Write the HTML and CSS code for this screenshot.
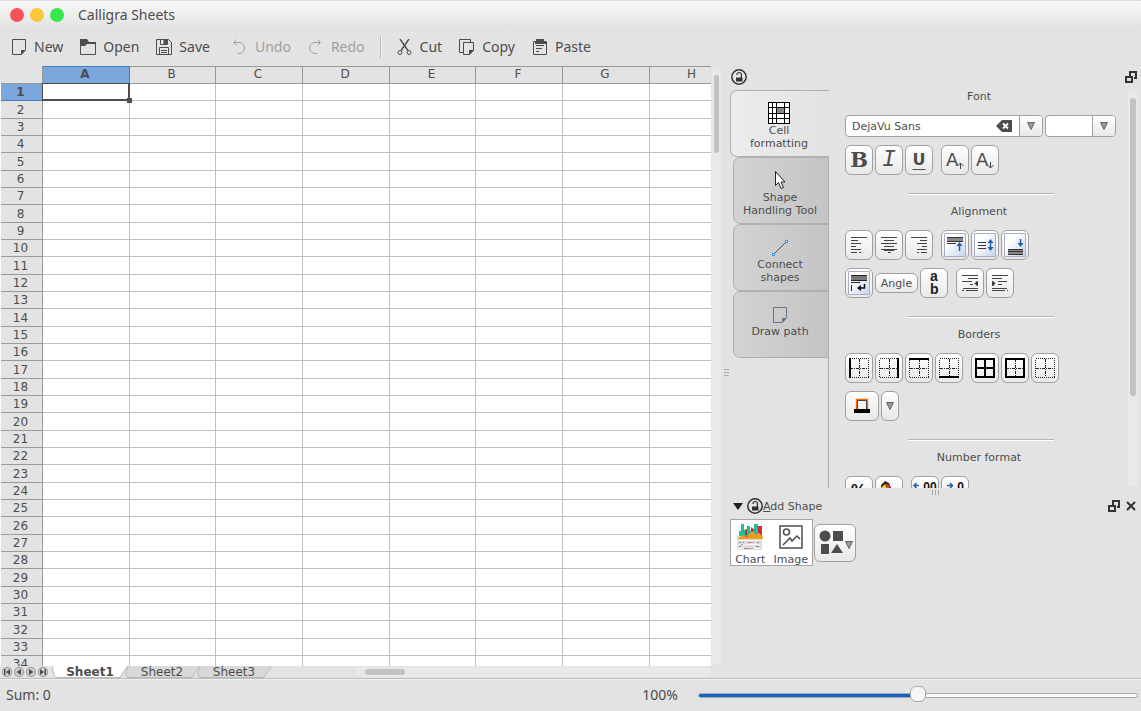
FILE: index.html
```
<!DOCTYPE html>
<html lang="en">
<head>
    <meta charset="UTF-8">
    <meta name="viewport" content="width=device-width, initial-scale=1.0">
    <title>Calligra Sheets</title>
    <link rel="stylesheet" href="styles.css">
</head>
<body>
    <!-- shared icons -->
    <svg class="defs" width="0" height="0" aria-hidden="true">
        <symbol id="page" viewBox="0 0 16 16">
            <path d="M1.5 .5h13v10l-4 5h-9z" fill="none" stroke="currentColor"/>
            <path d="M10 16v-5h5z" fill="currentColor"/>
        </symbol>
        <symbol id="lock" viewBox="0 0 16 16">
            <circle cx="8" cy="8" r="7.2" fill="none" stroke="#333" stroke-width="1.5"/>
            <path d="M6 6V5.500a2.200 2 0 0 1 4.400 0V9" fill="none" stroke="#333" stroke-width="1.2"/>
            <path d="M5 8.500h6.500V12.500H5z" fill="#333"/>
        </symbol>
        <symbol id="float" viewBox="0 0 12 12">
            <path d="M5 5V1h6v6H9" fill="none" stroke="#333" stroke-width="2"/>
            <path d="M1 6h6v5H1z" fill="none" stroke="#333" stroke-width="2"/>
        </symbol>
        <symbol id="down" viewBox="0 0 8 8">
            <path d="M.5 .5h7L4 7.500z" fill="#999" stroke="#666"/>
        </symbol>
        <symbol id="grid" viewBox="0 0 20 20">
            <g shape-rendering="crispEdges" fill="none" stroke="#222">
                <path d="M.5 .5h19v19H.5z" stroke-dasharray="1 1"/>
                <path d="M10.500 1v18M1 10.500h18" stroke-dasharray="3 1 1 1"/>
            </g>
        </symbol>
        <linearGradient id="sky" x2="1" y2="1">
            <stop offset=".3" stop-color="#fff"/>
            <stop offset="1" stop-color="#c4d2ea"/>
        </linearGradient>
        <symbol id="card" viewBox="0 0 22 24">
            <path d="M.5 .5h21v23H.5z" fill="url(#sky)" stroke="#a9b0c6"/>
        </symbol>
    </svg>

    <header class="titlebar">
        <button class="light close" aria-label="Close"></button>
        <button class="light minimize" aria-label="Minimize"></button>
        <button class="light maximize" aria-label="Maximize"></button>
        <h1>Calligra Sheets</h1>
    </header>

    <div class="toolbar">
        <button><svg width="16" height="16"><use href="#page"/></svg><span>New</span></button>
        <button>
            <svg width="16" height="16"><path d="M.5 4v11.500h15V4.500H6" fill="none" stroke="currentColor"/><path d="M0 0h7l2 3h7v2H7L5 7H0z" fill="currentColor"/></svg>
            <span>Open</span>
        </button>
        <button>
            <svg width="16" height="16" fill="none" stroke="currentColor"><path d="M.5 .5h12l3 3v12H.5zM3.500 15V8.500h9V15M4.500 .5v5h7v-5M5 11.500h6M5 13.500h6"/><path d="M8 1h3v4H8z" fill="currentColor"/></svg>
            <span>Save</span>
        </button>
        <button class="spaced" disabled>
            <svg width="16" height="16" fill="none" stroke="currentColor"><path d="M4.500 .5l-3 3 3 3M2 3.500h5a5.500 5.500 0 0 1 0 11H5.500"/></svg>
            <span>Undo</span>
        </button>
        <button disabled>
            <svg width="16" height="16" fill="none" stroke="currentColor"><path d="M9.500 .5l3 3-3 3M12 3.500H7a5.500 5.500 0 0 0 0 11h1.500"/></svg>
            <span>Redo</span>
        </button>
        <i class="divider"></i>
        <button>
            <svg width="16" height="16" fill="none" stroke="currentColor"><path d="M3 0l8 11.500M12 0L4 11.500" stroke-width="1.400"/><circle cx="3" cy="13.500" r="2"/><circle cx="12" cy="13.500" r="2"/></svg>
            <span>Cut</span>
        </button>
        <button>
            <svg width="16" height="16"><path d="M4 13.500H.5V.5h11V3M4.500 3.500h10v8l-4 4h-6z" fill="none" stroke="currentColor"/><path d="M10 16v-5h5z" fill="currentColor"/></svg>
            <span>Copy</span>
        </button>
        <button>
            <svg width="16" height="16"><path d="M1.500 2.500h13v13h-13z" fill="none" stroke="currentColor"/><path d="M4 0h8v2h2v3H3V2h1z" fill="currentColor"/><path d="M4 6.500h8M4 9.500h6M4 12.500h3" stroke="currentColor"/></svg>
            <span>Paste</span>
        </button>
    </div>

    <main class="workspace">
        <section class="editor">
            <div class="sheet">
                <table>
                    <thead><tr id="columns"><td class="corner"></td></tr></thead>
                    <tbody id="rows"></tbody>
                </table>
            </div>
            <div class="vscroll"><i></i></div>
            <nav class="sheetbar">
                <div class="steps">
                    <button aria-label="First sheet"><svg viewBox="0 0 10 10"><path d="M2 2h1.500v6H2zM8 2v6L4 5z"/></svg></button>
                    <button aria-label="Previous sheet"><svg viewBox="0 0 10 10"><path d="M7 2v6L2.500 5z"/></svg></button>
                    <button aria-label="Next sheet"><svg viewBox="0 0 10 10"><path d="M3 2v6l4.500-3z"/></svg></button>
                    <button aria-label="Last sheet"><svg viewBox="0 0 10 10"><path d="M6.500 2H8v6H6.500zM2 2v6l4-3z"/></svg></button>
                </div>
                <button class="tab active"><svg viewBox="0 0 76 12"><path d="M.5 0Q1 11.500 5 11.500h63L75.500 0"/></svg><span>Sheet1</span></button>
                <button class="tab"><svg viewBox="0 0 76 12"><path d="M4 0Q-1 11.500 5 11.500h63L75.500 0"/></svg><span>Sheet2</span></button>
                <button class="tab"><svg viewBox="0 0 76 12"><path d="M4 0Q-1 11.500 5 11.500h63L75.500 0"/></svg><span>Sheet3</span></button>
                <div class="hscroll"><i></i></div>
            </nav>
        </section>

        <div class="grip"><i></i><i></i><i></i></div>

        <aside class="docks">
            <section class="dock tools">
                <div class="dock-head">
                    <button aria-label="Lock"><svg width="16" height="16"><use href="#lock"/></svg></button>
                    <button class="right" aria-label="Float"><svg width="12" height="12"><use href="#float"/></svg></button>
                </div>
                <div class="dock-body">
                    <div class="tool-tabs">
                        <button class="active">
                            <svg width="22" height="22" shape-rendering="crispEdges"><path d="M0 0h22v22H0z" fill="#fff"/><path d="M9 6h7v5H9z" fill="#888"/><path d="M.5 .5h21v21H.5zM4.500 1v20M8.500 1v20M16.500 1v20M1 5.500h20M1 11.500h20M1 16.500h20" fill="none" stroke="#000"/></svg>
                            <span>Cell<br>formatting</span>
                        </button>
                        <button>
                            <svg width="22" height="22"><path d="M6.500 2.500v14l3-3 2.500 6 2.500-1-2.500-5.500h4z" fill="#fff" stroke="#222"/></svg>
                            <span>Shape<br>Handling Tool</span>
                        </button>
                        <button>
                            <svg width="22" height="22"><path d="M5 18L17 6" stroke="#555"/><path d="M3.500 17.500h2v2h-2zM16.500 4.500h2v2h-2z" fill="#fff" stroke="#1d8fe8"/></svg>
                            <span>Connect<br>shapes</span>
                        </button>
                        <button class="slate">
                            <svg width="16" height="22"><use href="#page" y="4" width="16" height="16"/></svg>
                            <span>Draw path</span>
                        </button>
                    </div>

                    <div class="options">
                        <h2>Font</h2>
                        <div class="row">
                            <div class="combo family">
                                <input type="text" value="DejaVu Sans" aria-label="Font family">
                                <button class="clear" aria-label="Clear"><svg width="16" height="12"><path d="M6 0h10v12H6L0 6z" fill="#4d4d4d"/><path d="M7 3.500l5 5M12 3.500l-5 5" stroke="#fff" stroke-width="1.800"/></svg></button>
                                <button class="drop" aria-label="Font list"><svg width="8" height="8"><use href="#down"/></svg></button>
                            </div>
                            <div class="combo size">
                                <input type="text" aria-label="Font size">
                                <button class="drop" aria-label="Size list"><svg width="8" height="8"><use href="#down"/></svg></button>
                            </div>
                        </div>
                        <div class="row">
                            <button class="btn bold">B</button>
                            <button class="btn italic">I</button>
                            <button class="btn under">U</button>
                            <button class="btn group" aria-label="Increase font size"><svg width="20" height="24"><text class="big-a" x="1" y="18">A</text><path d="M15.500 21v-6M12.500 18l3-3 3 3" fill="none" stroke="#444"/></svg></button>
                            <button class="btn" aria-label="Decrease font size"><svg width="20" height="24"><text class="big-a" x="1" y="18">A</text><path d="M15.500 14v6M12.500 17l3 3 3-3" fill="none" stroke="#444"/></svg></button>
                        </div>
                        <hr>

                        <h2>Alignment</h2>
                        <div class="row">
                            <button class="btn" aria-label="Align left"><svg width="16" height="16" stroke="#444"><path d="M0 .5h16M0 3.500h7M0 6.500h10M0 9.500h5M0 12.500h10M0 15.500h6M8 15.500h2"/></svg></button>
                            <button class="btn" aria-label="Align center"><svg width="16" height="16" stroke="#444"><path d="M0 .5h16M3 3.500h10M0 6.500h16M3 9.500h10M0 12.500h16M3 13.500h10M7 15.500h3"/></svg></button>
                            <button class="btn" aria-label="Align right"><svg width="16" height="16" stroke="#444"><path d="M0 .5h16M9 3.500h7M6 6.500h10M11 9.500h5M6 12.500h10M6 15.500h2M10 15.500h6"/></svg></button>
                            <button class="btn group" aria-label="Align top"><svg width="22" height="24"><use href="#card"/><path d="M3 4h16v5H3z" fill="#888"/><path d="M3 4.500h16M3 8.500h16M3 10.500h9" stroke="#333"/><path d="M15.500 18v-5" stroke="#245ca8" stroke-width="1.500"/><path d="M12.500 13l3-4 3 4z" fill="#245ca8"/></svg></button>
                            <button class="btn" aria-label="Align middle"><svg width="22" height="24"><use href="#card"/><path d="M4 9.500h8M4 12.500h8M4 15.500h8" stroke="#333"/><path d="M16.500 9v7" stroke="#245ca8" stroke-width="1.500"/><path d="M13.500 10l3-4 3 4zM13.500 14l3 4 3-4z" fill="#245ca8"/></svg></button>
                            <button class="btn" aria-label="Align bottom"><svg width="22" height="24"><use href="#card"/><path d="M4 16h15v5H4z" fill="#888"/><path d="M4 16.500h15M4 18.500h15M4 21.500h15" stroke="#333"/><path d="M16.500 6v6" stroke="#245ca8" stroke-width="1.500"/><path d="M13.500 10l3 4 3-4z" fill="#245ca8"/></svg></button>
                        </div>
                        <div class="row">
                            <button class="btn" aria-label="Wrap text"><svg width="22" height="24"><use href="#card"/><path d="M3 4h16v5H3z" fill="#777"/><path d="M3 4.500h16M3 9.500h16M3 11.500h9M3.500 14v6" stroke="#222"/><path d="M16.500 13v4H11" fill="none" stroke="#111" stroke-width="1.500"/><path d="M13 14v6l-4-3z" fill="#111"/></svg></button>
                            <button class="btn angle">Angle</button>
                            <button class="btn" aria-label="Vertical text"><svg width="20" height="28"><text class="vertical" x="6" y="12">a</text><text class="vertical" x="6" y="25">b</text></svg></button>
                            <button class="btn group" aria-label="Increase indent"><svg width="16" height="16" stroke="#444"><path d="M0 .5h16M6 3.500h10M0 6.500h10M8 9.500h3M1 13.500h15M0 15.500h2M4 15.500h12"/><path d="M15.500 6v5L13 8.500z" fill="#222"/></svg></button>
                            <button class="btn" aria-label="Decrease indent"><svg width="16" height="16" stroke="#444"><path d="M0 .5h16M0 3.500h10M6 6.500h9M6 9.500h4M0 13.500h15M0 15.500h13M15 15.500h1"/><path d="M.5 6v5L3 8.500z" fill="#222"/></svg></button>
                        </div>
                        <hr>

                        <h2>Borders</h2>
                        <div class="row">
                            <button class="btn" aria-label="Left border"><svg width="20" height="20"><use href="#grid"/><path d="M1 0v20" stroke="#000" stroke-width="2"/></svg></button>
                            <button class="btn" aria-label="Right border"><svg width="20" height="20"><use href="#grid"/><path d="M19 0v20" stroke="#000" stroke-width="2"/></svg></button>
                            <button class="btn" aria-label="Top border"><svg width="20" height="20"><use href="#grid"/><path d="M0 1h20" stroke="#000" stroke-width="2"/></svg></button>
                            <button class="btn" aria-label="Bottom border"><svg width="20" height="20"><use href="#grid"/><path d="M0 19h20" stroke="#000" stroke-width="2"/></svg></button>
                            <button class="btn group" aria-label="All borders"><svg width="20" height="20"><path d="M1 1h18v18H1zM10 1v18M1 10h18" fill="none" stroke="#000" stroke-width="2"/></svg></button>
                            <button class="btn" aria-label="Outline border"><svg width="20" height="20"><use href="#grid"/><path d="M1 1h18v18H1z" fill="none" stroke="#000" stroke-width="2"/></svg></button>
                            <button class="btn" aria-label="No border"><svg width="20" height="20"><use href="#grid"/></svg></button>
                        </div>
                        <div class="row">
                            <button class="btn color" aria-label="Border color"><svg width="16" height="16"><path d="M2.500 12V1.500h11V12" fill="none" stroke="#f60" stroke-width="1.300"/><path d="M3.500 12V2.500h9v9" fill="none" stroke="#444"/><path d="M0 11h16v4H0z"/></svg></button>
                            <button class="btn color-menu" aria-label="Pick border color"><svg width="8" height="8"><use href="#down"/></svg></button>
                        </div>
                        <hr>

                        <h2>Number format</h2>
                        <div class="row">
                            <button class="btn" aria-label="Percent format"><svg width="20" height="26"><text class="percent" x="2" y="18">%</text></svg></button>
                            <button class="btn" aria-label="Money format"><svg width="20" height="24"><path d="M2 6l4-4 4 2 2 5 6 3v12H2z" fill="#3a2a1c"/><path d="M2 9l4-4 2 5v10H2z" fill="#ed2"/><path d="M7 5l3 1 1 5-3 1z" fill="#d43"/></svg></button>
                            <button class="btn group" aria-label="Increase precision"><svg width="26" height="26"><path d="M2 7.500h5M4.500 5L2 7.500 4.500 10" fill="none" stroke="#1d62b4" stroke-width="1.500"/><text class="digits" x="8" y="13">.00</text></svg></button>
                            <button class="btn" aria-label="Decrease precision"><svg width="26" height="26"><path d="M5 7.500h5M8 5l2.500 2.500L8 10" fill="none" stroke="#1d62b4" stroke-width="1.500"/><text class="digits" x="12" y="13">.0</text></svg></button>
                        </div>
                    </div>
                    <div class="options-scroll"><i></i></div>
                </div>
            </section>

            <div class="grip wide"><i></i><i></i><i></i></div>

            <section class="dock shapes">
                <div class="dock-head">
                    <button class="collapse" aria-label="Collapse"><svg width="10" height="8"><path d="M0 1h10L5 8z" fill="#222"/></svg></button>
                    <button aria-label="Lock"><svg width="16" height="16"><use href="#lock"/></svg></button>
                    <h2><u>A</u>dd Shape</h2>
                    <button class="right" aria-label="Float"><svg width="12" height="12"><use href="#float"/></svg></button>
                    <button aria-label="Close"><svg width="10" height="10"><path d="M1 1l8 8M9 1L1 9" stroke="#333" stroke-width="2"/></svg></button>
                </div>
                <div class="shape-row">
                    <div class="shape-list">
                        <button>
                            <svg width="28" height="28"><path d="M1 13h25v14H1z" fill="#dcdfdf"/><path d="M2 17.500h22M2 21.500h22M2 25.500h22" stroke="#f6f6f6"/><path d="M3 19.500h2M7 19.500h1M12 19.500h5M20 23.500h3M3 23.500h2M8 25.500h3M21 19.500h2" stroke="#888"/><path d="M14 19.500h3M11 25.500h6M5 21.500h2" stroke="#e88"/><path d="M8 8l4-3 3 3V4l4 3 3-4h4v12H8z" fill="#d8263c"/><path d="M3 13V8h2V1h3v6h3V3h3v5h4V1h4v9h4v4z" fill="#1dbf93"/><path d="M23 4h3v10h-3zM9 6l2 2v4H9zM15 6l2 2v4h-2z" fill="#d8263c"/><path d="M2 15l5-3 4 2 5-6 4 4 3-2 4 4v2H2z" fill="#f49b1c"/></svg>
                            <span>Chart</span>
                        </button>
                        <button>
                            <svg width="28" height="28" fill="none" stroke="#4d4d4d" stroke-width="1.500"><path d="M3 3h22v22H3z"/><circle cx="9.500" cy="9" r="3"/><path d="M6 22l7-7 2 3 5-5 3 3"/></svg>
                            <span>Image</span>
                        </button>
                    </div>
                    <button class="btn more" aria-label="More shapes"><svg width="36" height="28"><circle cx="8" cy="7" r="5.500"/><path d="M16 2h10v10H16zM4 15h8v10H4zM20 15l6 9H14z"/><use href="#down" x="28" y="12" width="8" height="8"/></svg></button>
                </div>
            </section>
        </aside>
    </main>

    <footer class="statusbar">
        <span>Sum: 0</span>
        <label for="zoom">100%</label>
        <input type="range" id="zoom" min="0" max="100" value="50">
    </footer>

    <script src="script.js"></script>
</body>
</html>
```
FILE: styles.css
```
* {
    box-sizing: border-box;
}
html, body {
    height: 100%;
}
body {
    margin: 0;
    display: flex;
    flex-direction: column;
    overflow: hidden;
    background: #e3e3e3;
    color: #4d4d4d;
    font-family: "DejaVu Sans", sans-serif;
    font-size: 11px;
}
button {
    margin: 0;
    padding: 0;
    border: 0;
    background: none;
    color: inherit;
    font: inherit;
}
svg {
    display: block;
    flex: none;
}
h1, h2 {
    margin: 0;
    font-weight: normal;
}
.defs {
    position: absolute;
}

/* title and toolbar */
.titlebar {
    flex: none;
    display: flex;
    align-items: center;
    gap: 6px;
    height: 28px;
    padding-left: 10px;
    border-top: 1px solid #dadada;
    background: linear-gradient(#f8f8f8, #e3e3e3);
}
.titlebar h1 {
    margin-left: 8px;
    font: 14px/20px "Noto Sans", sans-serif;
}
.light {
    width: 14px;
    height: 14px;
    border-radius: 50%;
}
.close { background: #f6525a; }
.minimize { background: #fcc73b; }
.maximize { background: #37e84c; }

.toolbar {
    flex: none;
    display: flex;
    align-items: center;
    gap: 17px;
    height: 38px;
    padding-left: 11px;
    font: 14px/20px "Noto Sans", sans-serif;
}
.toolbar button {
    display: flex;
    align-items: center;
    gap: 7px;
}
.toolbar button:disabled {
    color: #a0a0a0;
}
.toolbar .spaced {
    margin-left: 5px;
}
.divider {
    width: 2px;
    height: 22px;
    margin: 0 -2px;
    border-left: 1px solid #bbb;
    background: #f3f3f3;
}

.workspace {
    flex: 1;
    display: flex;
    min-height: 0;
}

/* spreadsheet */
.editor {
    flex: 1;
    min-width: 0;
    display: grid;
    grid-template-columns: 1fr 11px;
    grid-template-rows: 1fr 12px;
}
.sheet {
    overflow: hidden;
    min-height: 0;
    padding-left: 1px;
    background: linear-gradient(#e3e3e3 18px, #fff 18px);
}
table {
    table-layout: fixed;
    width: max-content;
    border-collapse: separate;
    border-spacing: 0;
    font-size: 12px;
    line-height: 16px;
}
th, td {
    height: 17px;
    padding: 0;
    border-right: 1px solid #c0c0c0;
    border-bottom: 1px solid #c0c0c0;
}
tbody tr:nth-child(3n+2) > * {
    height: 18px;
}
th {
    background: #e3e3e3;
    border-color: #999;
    font-weight: normal;
}
tbody th {
    padding-right: 2px;
}
thead th {
    min-width: 87px;
    height: 18px;
    padding-right: 2px;
    border-top: 1px solid #999;
    line-height: 15px;
    vertical-align: top;
}
thead th:nth-child(3n) {
    min-width: 86px;
}
td.corner {
    min-width: 42px;
    border-color: #999;
}
tbody td {
    background: #fff;
}
th.current {
    background: #7aa7dc;
    border-color: #4a7cb8;
    font-weight: bold;
}
td.cursor {
    position: relative;
}
td.cursor::before {
    content: "";
    position: absolute;
    inset: -1px;
    border: 2px solid #4d4d4d;
    border-left-width: 1px;
    border-top-width: 1px;
}
td.cursor::after {
    content: "";
    position: absolute;
    right: -3px;
    bottom: -3px;
    width: 5px;
    height: 5px;
    background: #4d4d4d;
}
.vscroll {
    width: 9px;
    margin: 1px;
    padding: 8px 2px;
    border-radius: 5px;
    background: #e9e9e9;
}
.vscroll i {
    display: block;
    height: 78px;
    border-radius: 3px;
    background: #c2c2c2;
}
.sheetbar {
    display: flex;
    min-width: 0;
}
.steps {
    display: flex;
    align-items: center;
    gap: 2px;
    width: 52px;
    padding-left: 2px;
}
.steps button {
    width: 10px;
    height: 10px;
    border-radius: 50%;
    background: #d0d0d0;
    box-shadow: inset 0 0 0 1px #999;
    fill: #4d4d4d;
}
.tab {
    position: relative;
    width: 76px;
    height: 12px;
    margin-right: -4px;
    font-size: 12px;
    line-height: 12px;
}
.tab svg {
    position: absolute;
    inset: 0;
    fill: #d8d8d8;
    stroke: #bbb;
}
.tab span {
    position: relative;
}
.tab.active {
    z-index: 1;
    font-weight: bold;
}
.tab.active svg {
    fill: #fff;
}
.hscroll {
    flex: 1;
    margin: 1px 0 1px 89px;
    padding: 2px 8px;
    border-radius: 5px;
    background: #e9e9e9;
}
.hscroll i {
    display: block;
    width: 40px;
    height: 6px;
    border-radius: 3px;
    background: #c2c2c2;
}

/* splitter handles */
.grip {
    flex: none;
    display: flex;
    flex-direction: column;
    align-items: center;
    justify-content: center;
    gap: 2px;
    width: 8px;
}
.grip i {
    width: 5px;
    height: 1px;
    background: #aaa;
}
.grip.wide {
    flex-direction: row;
    width: auto;
    height: 8px;
}
.grip.wide i {
    width: 1px;
    height: 5px;
}

/* docks */
.docks {
    flex: none;
    display: flex;
    flex-direction: column;
    width: 411px;
}
.tools {
    flex: 1;
    min-height: 0;
    display: flex;
    flex-direction: column;
}
.shapes {
    flex: none;
    height: 182px;
}
.dock-head {
    flex: none;
    display: flex;
    align-items: center;
    height: 23px;
    padding: 0 4px 1px 1px;
}
.dock-head .right {
    margin-left: auto;
}
.shapes .dock-head {
    height: 20px;
    padding: 0 5px 0 3px;
}
.collapse {
    margin-right: 4px;
}
.shapes .right {
    margin-right: 6px;
}
.dock-body {
    flex: 1;
    min-height: 0;
    display: flex;
}
.tool-tabs {
    display: flex;
    flex-direction: column;
    width: 99px;
    padding-top: 1px;
    background: linear-gradient(#aaa, #aaa) right 68px / 1px 100% no-repeat;
}
.tool-tabs button {
    display: flex;
    flex-direction: column;
    align-items: center;
    height: 67px;
    margin-left: 3px;
    padding: 11px 2px 0 0;
    border: 1px solid #b0b0b0;
    border-radius: 7px 0 0 7px;
    background: linear-gradient(to right, #d3d3d3, #c4c4c4);
    line-height: 13px;
}
.tool-tabs button.active {
    margin-left: 0;
    border-right: 0;
    background: linear-gradient(to right, #ececec, #e3e3e3);
}
.tool-tabs .slate svg {
    color: #66758a;
}
.options {
    flex: 1;
    min-width: 0;
    padding-left: 16px;
    overflow: hidden;
}
.options h2 {
    width: 268px;
    margin-bottom: 10px;
    font-size: 11px;
    line-height: 16px;
    text-align: center;
}
.options hr {
    width: 146px;
    height: 2px;
    margin: 18px 0 9px 63px;
    border: 0;
    border-top: 1px solid #b5b5b5;
    background: #fff;
}
.row {
    display: flex;
    align-items: center;
    gap: 2px;
}
.row + .row {
    margin-top: 8px;
}
.combo {
    display: flex;
    height: 22px;
    border: 1px solid #a0a0a0;
    border-radius: 4px;
    background: #fff;
    overflow: hidden;
}
.family { width: 198px; }
.size { width: 71px; }
.combo input {
    flex: 1;
    min-width: 0;
    padding: 0 6px;
    border: 0;
    outline: 0;
    background: none;
    color: inherit;
    font: inherit;
}
.clear {
    width: 23px;
}
.drop {
    display: grid;
    place-items: center;
    width: 23px;
    border-left: 1px solid #a0a0a0;
    background: linear-gradient(#fff, #e8e8e8);
}
.btn {
    display: grid;
    place-items: center;
    width: 28px;
    height: 30px;
    border: 1px solid #a0a0a0;
    border-radius: 6px;
    background: linear-gradient(#fff, #e8e8e8);
}
.btn.group {
    margin-left: 6px;
}
.bold {
    font: bold 21px/26px "DejaVu Serif", serif;
}
.italic {
    font: italic 23px/28px "Liberation Mono", monospace;
}
.under {
    font: bold 16px/20px "DejaVu Sans", sans-serif;
    text-decoration: underline 1px;
    text-underline-offset: 4px;
}
.big-a {
    font: 18px "DejaVu Sans", sans-serif;
    fill: #4d4d4d;
}
.btn.angle {
    width: 43px;
    height: 20px;
}
.vertical {
    font: bold 14px "Liberation Sans", sans-serif;
    fill: #222;
}
.btn.color { width: 34px; }
.btn.color-menu { width: 18px; }
.percent {
    font: bold 17px "Liberation Sans", sans-serif;
    fill: #111;
}
.digits {
    font: bold 12px "Liberation Sans", sans-serif;
    fill: #111;
}
.options-scroll {
    flex: none;
    width: 10px;
    margin: 1px 3px 1px 0;
    padding: 8px 2px;
    border-radius: 5px;
    background: #e9e9e9;
}
.options-scroll i {
    display: block;
    height: 298px;
    border-radius: 3px;
    background: #c2c2c2;
}

/* add shape dock */
.shapes h2 {
    padding-top: 1px;
    font-size: 11px;
    line-height: 15px;
}
.shape-row {
    display: flex;
    align-items: center;
    gap: 1px;
    padding-top: 3px;
}
.shape-list {
    display: flex;
    width: 83px;
    height: 47px;
    border: 1px solid #a5a5a5;
    background: #fff;
}
.shape-list button {
    flex: 1;
    display: flex;
    flex-direction: column;
    align-items: center;
    padding: 3px 2px 0 0;
    line-height: 17px;
}
.btn.more {
    width: 42px;
    height: 38px;
    fill: #4d4d4d;
}

/* status bar */
.statusbar {
    flex: none;
    display: flex;
    align-items: center;
    height: 33px;
    padding: 0 3px 0 6px;
    border-top: 1px solid #bdbdbd;
    box-shadow: inset 0 1px #efefef;
    font: 14px/20px "Noto Sans", sans-serif;
}
.statusbar label {
    margin-left: auto;
}
.statusbar input {
    appearance: none;
    width: 440px;
    height: 16px;
    margin: 0 0 0 20px;
    background: none;
}
.statusbar input::-webkit-slider-runnable-track {
    height: 5px;
    border: 1px solid #a8a8a8;
    border-radius: 3px;
    background: linear-gradient(to right, #1264c8 50%, #f8f8f8 50%);
}
.statusbar input::-webkit-slider-thumb {
    appearance: none;
    width: 16px;
    height: 16px;
    margin-top: -8px;
    border: 1px solid #a8a8a8;
    border-radius: 6px;
    background: #f6f6f6;
}
```
FILE: script.js
```
var columns = "ABCDEFGH";
var rowCount = 34;

var head = document.getElementById("columns");
var body = document.getElementById("rows");

for (var c = 0; c < columns.length; c++) {
    var th = document.createElement("th");
    th.textContent = columns[c];
    if (c === 0) th.className = "current";
    head.appendChild(th);
}

for (var r = 1; r <= rowCount; r++) {
    var tr = document.createElement("tr");
    var label = document.createElement("th");
    label.textContent = r;
    if (r === 1) label.className = "current";
    tr.appendChild(label);
    for (var i = 0; i < columns.length; i++) {
        var td = document.createElement("td");
        if (r === 1 && i === 0) td.className = "cursor";
        tr.appendChild(td);
    }
    body.appendChild(tr);
}
```
